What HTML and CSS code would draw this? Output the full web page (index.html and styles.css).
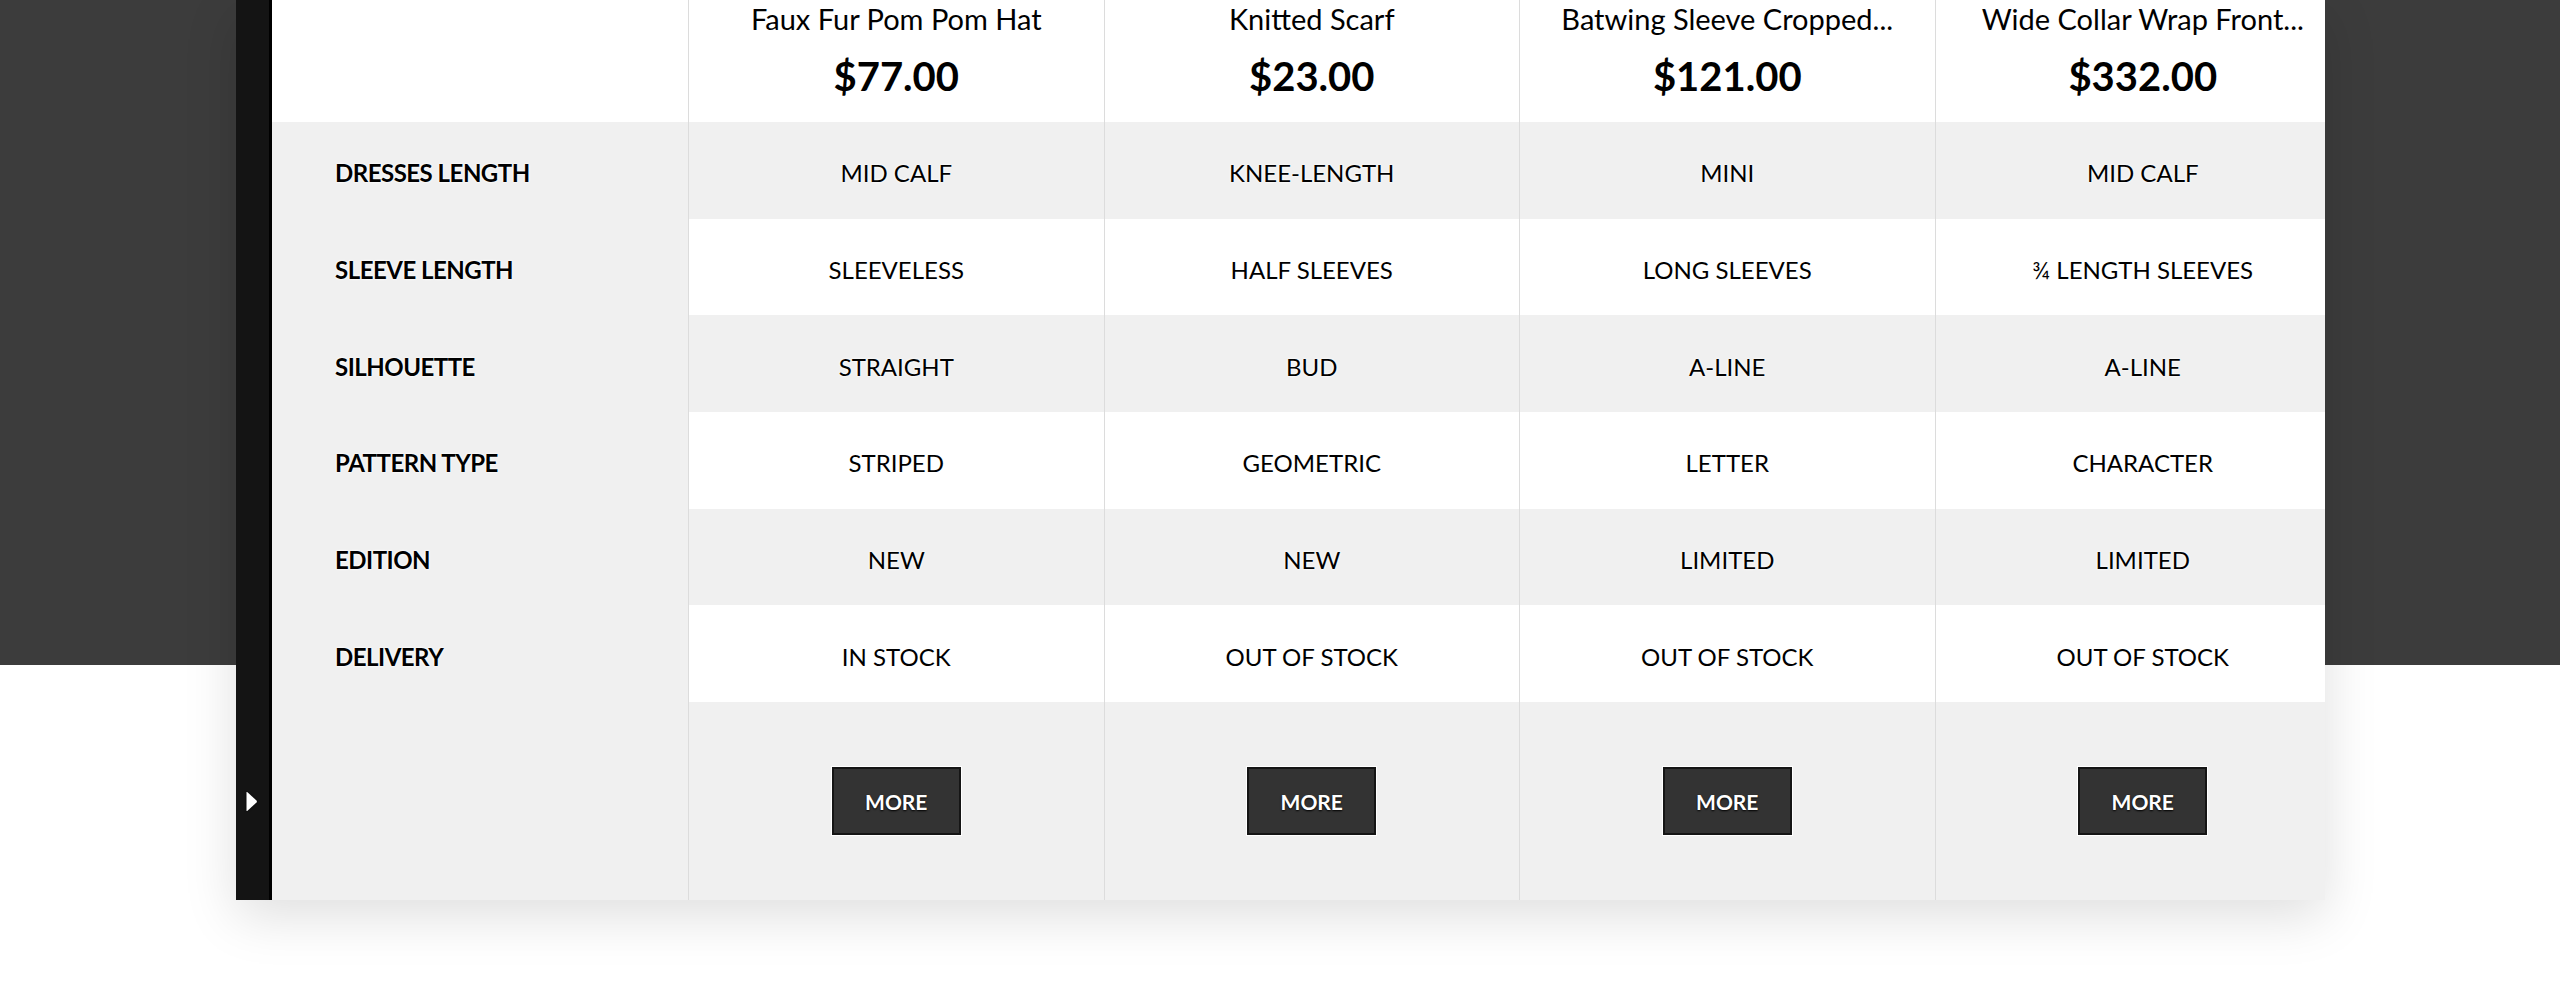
FILE: index.html
```html
<!DOCTYPE html>
<html lang="en">
<head>
<meta charset="utf-8">
<title>Compare products</title>
<link rel="stylesheet" href="styles.css">
</head>
<body>
<div class="page">
  <div class="compare">
    <div class="toggle">
      <svg class="toggle-icon" width="13" height="21" viewBox="0 0 13 21"><path d="M1.5 1.5 Q1.5 0.5 2.5 1.3 L11.5 9.5 Q12.3 10.5 11.5 11.5 L2.5 19.7 Q1.5 20.5 1.5 19.5 Z" fill="#fff"/></svg>
    </div>
    <div class="viewport">
      <div class="table">
        <div class="row head">
          <div class="cell label"></div>
          <div class="cell product"><div class="name">Faux Fur Pom Pom Hat</div><div class="price">$77.00</div></div>
          <div class="cell product"><div class="name">Knitted Scarf</div><div class="price">$23.00</div></div>
          <div class="cell product"><div class="name">Batwing Sleeve Cropped...</div><div class="price">$121.00</div></div>
          <div class="cell product"><div class="name">Wide Collar Wrap Front...</div><div class="price">$332.00</div></div>
        </div>
        <div class="row gray">
          <div class="cell label">DRESSES LENGTH</div>
          <div class="cell value">MID CALF</div>
          <div class="cell value">KNEE-LENGTH</div>
          <div class="cell value">MINI</div>
          <div class="cell value">MID CALF</div>
        </div>
        <div class="row">
          <div class="cell label">SLEEVE LENGTH</div>
          <div class="cell value">SLEEVELESS</div>
          <div class="cell value">HALF SLEEVES</div>
          <div class="cell value">LONG SLEEVES</div>
          <div class="cell value">¾ LENGTH SLEEVES</div>
        </div>
        <div class="row gray">
          <div class="cell label">SILHOUETTE</div>
          <div class="cell value">STRAIGHT</div>
          <div class="cell value">BUD</div>
          <div class="cell value">A-LINE</div>
          <div class="cell value">A-LINE</div>
        </div>
        <div class="row">
          <div class="cell label">PATTERN TYPE</div>
          <div class="cell value">STRIPED</div>
          <div class="cell value">GEOMETRIC</div>
          <div class="cell value">LETTER</div>
          <div class="cell value">CHARACTER</div>
        </div>
        <div class="row gray">
          <div class="cell label">EDITION</div>
          <div class="cell value">NEW</div>
          <div class="cell value">NEW</div>
          <div class="cell value">LIMITED</div>
          <div class="cell value">LIMITED</div>
        </div>
        <div class="row">
          <div class="cell label">DELIVERY</div>
          <div class="cell value">IN STOCK</div>
          <div class="cell value">OUT OF STOCK</div>
          <div class="cell value">OUT OF STOCK</div>
          <div class="cell value">OUT OF STOCK</div>
        </div>
        <div class="row gray actions">
          <div class="cell label"></div>
          <div class="cell value"><a class="more" href="#">MORE</a></div>
          <div class="cell value"><a class="more" href="#">MORE</a></div>
          <div class="cell value"><a class="more" href="#">MORE</a></div>
          <div class="cell value"><a class="more" href="#">MORE</a></div>
        </div>
      </div>
    </div>
  </div>
</div>
</body>
</html>
```
FILE: styles.css
```css
html, body {
  margin: 0;
  padding: 0;
}
body {
  background: linear-gradient(to bottom, #3c3c3c 0, #3c3c3c 665px, #ffffff 665px);
  font-family: Lato, "Open Sans", "Liberation Sans", sans-serif;
  color: #000;
  min-height: 1000px;
}
.page {
  padding-left: 236px;
}
.compare {
  display: flex;
  width: 2089px;
  height: 900px;
  box-shadow: 0 16px 50px rgba(0, 0, 0, 0.13);
  background: #f0f0f0;
}
.toggle {
  flex: 0 0 33px;
  background: #141414;
  border-right: 3px solid #000;
  display: flex;
  flex-direction: column;
  justify-content: flex-end;
  align-items: center;
  padding-bottom: 88px;
  box-sizing: content-box;
}
.toggle-icon {
  display: block;
  margin-left: -3px;
  filter: drop-shadow(0 0 1px rgba(0,0,0,0.8));
}
.viewport {
  flex: 1 1 auto;
  overflow: hidden;
}
.table {
  width: 2080px;
}
.row {
  display: grid;
  grid-template-columns: 416px repeat(4, 415.5px);
  height: 96.67px;
  background: #fff;
}
.row.gray {
  background: #f0f0f0;
}
.row.head {
  height: 122px;
}
.row.actions {
  height: 198px;
}
.cell {
  display: flex;
  align-items: center;
  justify-content: center;
  box-sizing: border-box;
  border-left: 1px solid #dcdcdc;
  font-size: 24px;
  text-shadow: 0 0 3px #fff, 0 0 2px #fff;
  padding-top: 5px;
}
.cell.label {
  border-left: none;
  background: #f0f0f0;
  justify-content: flex-start;
  padding-left: 63px;
  font-weight: 700;
  font-size: 24px;
  letter-spacing: -0.5px;
}
.head .cell.label {
  background: #fff;
}
.cell.product {
  flex-direction: column;
  justify-content: flex-start;
  padding-top: 2px;
}
.name {
  font-size: 29px;
  line-height: 1.2;
  white-space: nowrap;
}
.price {
  font-size: 40px;
  line-height: 1.2;
  font-weight: 700;
  margin-top: 15px;
}
.more {
  display: flex;
  align-items: center;
  justify-content: center;
  width: 129px;
  height: 68px;
  box-sizing: border-box;
  background: #333;
  border: 2px solid #151515;
  box-shadow: 0 0 0 1px #fff;
  color: #fff;
  font-weight: 700;
  font-size: 21px;
  text-decoration: none;
  text-shadow: 0 1px 2px #000;
  margin-top: -4px;
}
```
